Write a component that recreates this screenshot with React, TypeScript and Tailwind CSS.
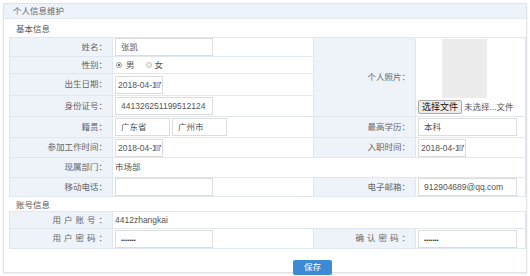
import React from 'react';

const font = { fontFamily: '"Liberation Sans", "Noto Sans CJK SC", sans-serif' };

function Box({ w, children }: { w: string; children?: React.ReactNode }) {
  return (
    <div className={`${w} h-[18px] border border-[#dcdcdc] bg-white pl-[5px] text-[8.5px] leading-[16px] text-[#555] overflow-hidden whitespace-nowrap`}>
      {children}
    </div>
  );
}

function DateBox() {
  return (
    <div className="relative w-[48px] h-[18px] border border-[#dcdcdc] bg-white pl-[2px] text-[8.5px] leading-[16px] text-[#555] overflow-hidden whitespace-nowrap">
      2018-04-17
      <span className="absolute right-[2px] top-[5px] w-[5px] h-[6px] bg-[#c7d0e2] border border-[#a7b5cf]" />
    </div>
  );
}

function Dots() {
  return <span className="text-[6px] tracking-[0px] text-[#333]">•••••••</span>;
}

function Label({ children, h, rows }: { children?: React.ReactNode; h?: string; rows?: number }) {
  return (
    <td rowSpan={rows} className={`${h ?? ''} bg-[#eef3fa] border border-[#e1e7ef] text-right pr-[5px] text-[8.5px] text-[#666] whitespace-nowrap`}>
      {children}
    </td>
  );
}

function Val({ children, h, span }: { children?: React.ReactNode; h: string; span?: number }) {
  return (
    <td colSpan={span} className={`${h} border border-[#e1e7ef] pl-[2px] text-[8.5px] text-[#555]`}>
      {children}
    </td>
  );
}

export default function App() {
  return (
    <div className="w-[530px] h-[276px] bg-white pt-[3px] pl-[3px] pr-[3px]" style={font}>
      <div className="h-[270px] border border-[#dfe3e8] shadow-[0_1px_2px_rgba(0,0,0,0.08)]">
        <div className="h-[15px] bg-[#eef3fb] border-b border-[#e3e8ef] pl-[9px] text-[8.5px] leading-[14px] text-[#666]">
          个人信息维护
        </div>
        <div className="pl-[12px] pt-[4px] h-[18px] text-[8.5px] text-[#555]">基本信息</div>
        <div className="pl-[5px]">
          <table className="border-collapse table-fixed w-[516px]">
            <colgroup>
              <col className="w-[103px]" />
              <col className="w-[201px]" />
              <col className="w-[102px]" />
              <col className="w-[110px]" />
            </colgroup>
            <tbody>
              <tr>
                <Label h="h-[19px]">姓名：</Label>
                <Val h="h-[19px]"><Box w="w-[98px]">张凯</Box></Val>
                <Label rows={4}>个人照片：</Label>
                <td rowSpan={4} className="border border-[#e1e7ef] align-top pl-[2px]">
                  <div className="w-[45px] h-[59px] bg-[#ececec] ml-[24px] mt-[1px]" />
                  <div className="flex items-center mt-[2px] text-[8.5px] whitespace-nowrap">
                    <span className="h-[14px] px-[3px] leading-[12px] border border-[#a9a9a9] bg-[#ececec] rounded-[2px] text-[#111] text-[9px]">选择文件</span>
                    <span className="ml-[2px] text-[#555]">未选择...文件</span>
                  </div>
                </td>
              </tr>
              <tr>
                <Label h="h-[17px]">性别：</Label>
                <Val h="h-[17px]">
                  <div className="flex items-center pl-[1px]">
                    <span className="w-[6px] h-[6px] rounded-full border border-[#999] flex items-center justify-center">
                      <span className="w-[2px] h-[2px] rounded-full bg-[#444]" />
                    </span>
                    <span className="ml-[4px]">男</span>
                    <span className="ml-[11px] w-[6px] h-[6px] rounded-full border border-[#c4c4c4] bg-[#f2f2f2]" />
                    <span className="ml-[3px]">女</span>
                  </div>
                </Val>
              </tr>
              <tr>
                <Label h="h-[22px]">出生日期：</Label>
                <Val h="h-[22px]"><DateBox /></Val>
              </tr>
              <tr>
                <Label h="h-[21px]">身份证号：</Label>
                <Val h="h-[21px]"><Box w="w-[98px]">441326251199512124</Box></Val>
              </tr>
              <tr>
                <Label h="h-[21px]">籍贯：</Label>
                <Val h="h-[21px]">
                  <div className="flex gap-[2px]">
                    <Box w="w-[55px]">广东省</Box>
                    <Box w="w-[55px]">广州市</Box>
                  </div>
                </Val>
                <Label h="h-[21px]">最高学历：</Label>
                <Val h="h-[21px]"><Box w="w-[99px]">本科</Box></Val>
              </tr>
              <tr>
                <Label h="h-[20px]">参加工作时间：</Label>
                <Val h="h-[20px]"><DateBox /></Val>
                <Label h="h-[20px]">入职时间：</Label>
                <Val h="h-[20px]"><DateBox /></Val>
              </tr>
              <tr>
                <Label h="h-[20px]">现属部门：</Label>
                <Val h="h-[20px]" span={3}>市场部</Val>
              </tr>
              <tr>
                <Label h="h-[19px]">移动电话：</Label>
                <Val h="h-[19px]"><Box w="w-[98px]" /></Val>
                <Label h="h-[19px]">电子邮箱：</Label>
                <Val h="h-[19px]"><Box w="w-[99px]">912904689@qq.com</Box></Val>
              </tr>
            </tbody>
          </table>
        </div>
        <div className="pl-[12px] pt-[2px] h-[14px] text-[8.5px] leading-[12px] text-[#555]">账号信息</div>
        <div className="pl-[5px]">
          <table className="border-collapse table-fixed w-[516px]">
            <colgroup>
              <col className="w-[103px]" />
              <col className="w-[201px]" />
              <col className="w-[102px]" />
              <col className="w-[110px]" />
            </colgroup>
            <tbody>
              <tr>
                <Label h="h-[17px]"><span className="tracking-[3px]">用户账号</span>：</Label>
                <Val h="h-[17px]" span={3}>4412zhangkai</Val>
              </tr>
              <tr>
                <Label h="h-[20px]"><span className="tracking-[3px]">用户密码</span>：</Label>
                <Val h="h-[20px]"><Box w="w-[98px]"><Dots /></Box></Val>
                <Label h="h-[20px]"><span className="tracking-[3px]">确认密码</span>：</Label>
                <Val h="h-[20px]"><Box w="w-[99px]"><Dots /></Box></Val>
              </tr>
            </tbody>
          </table>
        </div>
        <div className="pt-[4px] pl-[289px]">
          <button className="w-[39px] h-[15px] bg-[#3a8ad6] rounded-[2px] text-white text-[8.5px] leading-[15px]">保存</button>
        </div>
      </div>
    </div>
  );
}
